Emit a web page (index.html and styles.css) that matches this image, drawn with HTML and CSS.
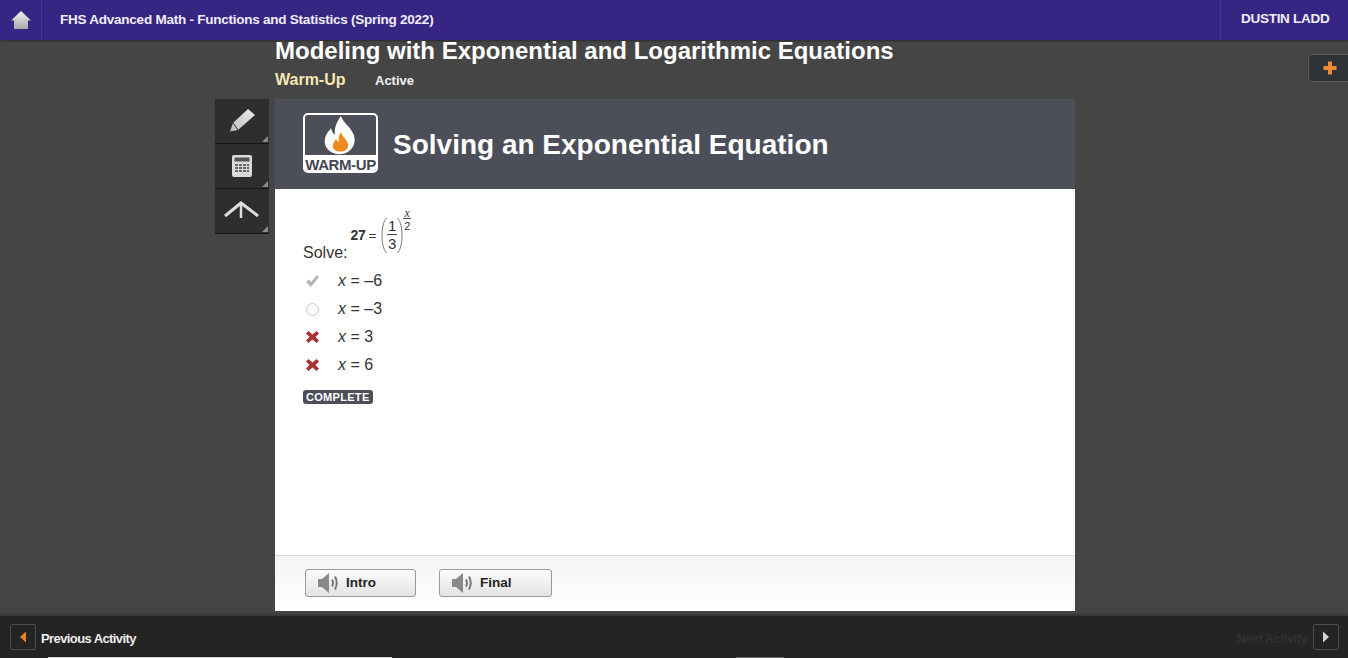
FILE: index.html
```html
<!DOCTYPE html>
<html lang="en">
<head>
<meta charset="utf-8">
<title>Warm-Up</title>
<link rel="stylesheet" href="styles.css">
</head>
<body>
<header class="topbar">
  <a class="home"><svg width="20" height="20" viewBox="0 0 20 20"><defs><linearGradient id="hg" x1="0" y1="0" x2="0" y2="1"><stop offset="0" stop-color="#f2f2f2"/><stop offset="1" stop-color="#a9a9a9"/></linearGradient></defs><path d="M10 1 L20 10.500 H17 V19 H3 V10.500 H0 Z" fill="url(#hg)"/></svg></a>
  <div class="course">FHS Advanced Math - Functions and Statistics (Spring 2022)</div>
  <div class="user">DUSTIN LADD</div>
</header>
<div class="stage">
  <div class="plus-tab"><svg width="14" height="14" viewBox="0 0 14 14"><path d="M5 0.500H9V5H13.500V9H9V13.500H5V9H0.500V5H5Z" fill="#ee8a32"/></svg></div>
  <aside class="tools">
    <div class="tool"><svg width="28" height="30" viewBox="0 0 28 30"><defs><linearGradient id="pg" x1="0" y1="1" x2="1" y2="0"><stop offset="0" stop-color="#bdbdbd"/><stop offset="1" stop-color="#ececec"/></linearGradient></defs><path d="M20 3 L27 9 L10 24 L2 25.500 L5 17 Z" fill="url(#pg)"/><path d="M5 17 L10 24" stroke="#333" stroke-width="1"/></svg></div>
    <div class="tool"><svg width="22" height="24" viewBox="0 0 22 24"><rect x="1" y="1" width="20" height="22" rx="2" fill="#dadada"/><rect x="3.500" y="3.500" width="15" height="4" fill="#555"/><path d="M4 10h3v2H4zM8 10h3v2H8zM12 10h3v2H12zM16 10h2v2H16zM4 13h3v2H4zM8 13h3v2H8zM12 13h3v2H12zM16 13h2v2H16zM4 16h3v2H4zM8 16h3v2H8zM12 16h3v2H12zM16 16h2v2H16z" fill="#666"/></svg></div>
    <div class="tool"><svg width="36" height="22" viewBox="0 0 36 22"><path d="M1 16 L17 3 L34 16" fill="none" stroke="#dedede" stroke-width="3"/><path d="M17 3 V18" stroke="#dedede" stroke-width="2.500"/></svg></div>
  </aside>
  <main class="column">
    <h1 class="lesson">Modeling with Exponential and Logarithmic Equations</h1>
    <div class="crumb"><span class="kind">Warm-Up</span><span class="status">Active</span></div>
    <section class="card">
      <div class="banner">
        <div class="badge">
          <svg class="flame" width="40" height="41" viewBox="0 0 40 46" preserveAspectRatio="none"><path d="M21 1 C23 9 31 13 34 23 C37 35 29 44 20 44 C10 44 3 36 5 26 C6 21 9 18 11 15 C12 19 13 21 15 22 C14 14 17 7 21 1Z" fill="#fff"/><path d="M21 19 C22 25 27 26 28 33 C29 39 24 41 20 41 C15 41 12 37 13 33 C14 30 15 29 16 27 C17 29 18 30 19 30 C18 26 19 22 21 19Z" fill="#ee8a1f"/></svg>
          <span class="badge-label">WARM-UP</span>
        </div>
        <h2 class="activity">Solving an Exponential Equation</h2>
      </div>
      <div class="content">
        <div class="prompt">
          <span class="solve">Solve:</span>
          <span class="math">
            <span class="m27">27</span><span class="meq">=</span>
            <svg class="paren" width="6" height="37" viewBox="0 0 6 37"><path d="M5.500 1 C2 5 1 12 1 18.500 C1 25 2 32 5.500 36" fill="none" stroke="#777" stroke-width="1"/></svg>
            <span class="frac"><span class="fnum">1</span><span class="fden">3</span></span>
            <svg class="paren" width="6" height="37" viewBox="0 0 6 37"><path d="M0.500 1 C4 5 5 12 5 18.500 C5 25 4 32 0.500 36" fill="none" stroke="#777" stroke-width="1"/></svg>
            <span class="exp"><i class="expn">x</i><span class="expd">2</span></span>
          </span>
        </div>
        <ul class="answers">
          <li class="answer"><span class="mark"><svg width="15" height="14" viewBox="0 0 15 14"><path d="M1 8 L4 5.500 L6 8 L12 1 L14 3 L6 13 Z" fill="#b5b5b5"/></svg></span><span><i>x</i> = –6</span></li>
          <li class="answer"><span class="mark"><svg width="15" height="15" viewBox="0 0 15 15"><circle cx="7.500" cy="7.500" r="6" fill="#fafafa" stroke="#c9c9c9"/></svg></span><span><i>x</i> = –3</span></li>
          <li class="answer"><span class="mark"><svg width="15" height="14" viewBox="0 0 15 14"><path d="M1 3.500 L3.500 1 L7.500 4.500 L11.500 1 L14 3.500 L10.500 7 L14 10.500 L11.500 13 L7.500 9.500 L3.500 13 L1 10.500 L4.500 7 Z" fill="#a93232"/></svg></span><span><i>x</i> = 3</span></li>
          <li class="answer"><span class="mark"><svg width="15" height="14" viewBox="0 0 15 14"><path d="M1 3.500 L3.500 1 L7.500 4.500 L11.500 1 L14 3.500 L10.500 7 L14 10.500 L11.500 13 L7.500 9.500 L3.500 13 L1 10.500 L4.500 7 Z" fill="#a93232"/></svg></span><span><i>x</i> = 6</span></li>
        </ul>
        <span class="complete">COMPLETE</span>
      </div>
      <div class="audio">
        <button class="audio-btn intro"><svg width="22" height="24" viewBox="0 0 22 24"><path d="M1 8H5L12 2V22L5 16H1Z" fill="#8a8a8a"/><path d="M15 8.500 Q17 12 15 15.500M18 5.500 Q21.500 12 18 18.500" fill="none" stroke="#777" stroke-width="2"/></svg>Intro</button>
        <button class="audio-btn final"><svg width="22" height="24" viewBox="0 0 22 24"><path d="M1 8H5L12 2V22L5 16H1Z" fill="#8a8a8a"/><path d="M15 8.500 Q17 12 15 15.500M18 5.500 Q21.500 12 18 18.500" fill="none" stroke="#777" stroke-width="2"/></svg>Final</button>
      </div>
    </section>
  </main>
</div>
<footer class="footer">
  <div class="nav">
    <span class="nav-btn"><svg width="8" height="12" viewBox="0 0 8 12"><path d="M7 0.500V11.500L1 6Z" fill="#e9821f"/></svg></span>
    <span class="prev">Previous Activity</span>
  </div>
  <div class="nav">
    <span class="next">Next Activity</span>
    <span class="nav-btn small"><svg width="8" height="12" viewBox="0 0 8 12"><path d="M1 0.500V11.500L7 6Z" fill="#d4d4d4"/></svg></span>
  </div>
  <div class="progress one"></div>
  <div class="progress two"></div>
</footer>
</body>
</html>
```
FILE: styles.css
```css
* { box-sizing: border-box; }
html, body { margin: 0; height: 658px; overflow: hidden; }
body {
  display: flex;
  flex-direction: column;
  background: #454545;
  font-family: "Liberation Sans", Arial, sans-serif;
  color: #222;
}
.topbar {
  flex: 0 0 40px;
  display: flex;
  align-items: center;
  background: #372584;
  color: #f0eef8;
  box-shadow: 0 1px 2px rgba(0,0,0,.4);
  font-weight: bold;
  font-size: 13.500px;
}
.home {
  flex: 0 0 42px;
  height: 40px;
  display: flex;
  align-items: center;
  justify-content: center;
  border-right: 1px solid #45349a;
}
.course { flex: 1; padding: 0 0 2px 18px; letter-spacing: -0.24px; }
.user {
  flex: 0 0 128px;
  height: 40px;
  line-height: 38px;
  padding-left: 20px;
  border-left: 1px solid #45349a;
  letter-spacing: -0.28px;
}
.stage {
  position: relative;
  flex: 1;
  display: flex;
  padding-left: 215px;
}
.plus-tab {
  position: absolute;
  right: -6px;
  top: 14px;
  width: 46px;
  height: 28px;
  display: flex;
  align-items: center;
  padding-left: 14px;
  background: #2f3236;
  border: 1px solid #5c5c5c;
  border-radius: 4px;
}
.tools {
  width: 60px;
  padding-top: 59px;
  display: flex;
  flex-direction: column;
}
.tool {
  position: relative;
  width: 54px;
  height: 45px;
  display: flex;
  align-items: center;
  justify-content: center;
  background: #2e2e2e;
  border-bottom: 1px solid #151515;
}
.tool::after {
  content: "";
  position: absolute;
  right: 1px;
  bottom: 1px;
  border-style: solid;
  border-width: 0 0 6px 6px;
  border-color: transparent transparent #8b8b8b transparent;
}
.column { width: 800px; display: flex; flex-direction: column; }
.lesson {
  margin: 0;
  height: 22px;
  line-height: 22px;
  color: #fff;
  font-size: 24px;
  font-weight: bold;
}
.crumb {
  height: 37px;
  padding-top: 9px;
  display: flex;
  align-items: baseline;
}
.kind { color: #f8e6b0; font-size: 16px; font-weight: bold; width: 100px; }
.status { color: #f2f2f2; font-size: 13px; font-weight: bold; }
.card { height: 512px; display: flex; flex-direction: column; background: #fff; }
.banner {
  height: 90px;
  flex: none;
  display: flex;
  align-items: flex-start;
  gap: 15px;
  padding: 14px 0 0 28px;
  background: #4c4f5a;
}
.badge {
  width: 75px;
  height: 60px;
  display: flex;
  flex-direction: column;
  align-items: center;
  justify-content: flex-end;
  position: relative;
  background: #4c4f5a;
  border: 2px solid #fff;
  border-radius: 5px;
  overflow: hidden;
}
.flame { position: absolute; top: 0; left: 15px; z-index: 1; }
.badge-label {
  width: 100%;
  height: 16px;
  line-height: 20px;
  background: #fff;
  color: #444750;
  text-align: center;
  font-size: 15px;
  font-weight: bold;
  letter-spacing: -0.4px;
  white-space: nowrap;
  position: relative;
}
.activity { margin: 16px 0 0; color: #fff; font-size: 28px; font-weight: bold; line-height: 32px; }
.content { flex: 1; padding: 20px 28px 0; display: flex; flex-direction: column; align-items: flex-start; }
.prompt { height: 52px; display: flex; align-items: flex-end; }
.solve { font-size: 16px; color: #333; line-height: 18px; margin-bottom: -1px; }
.math { display: flex; align-items: center; margin-left: 3px; height: 48px; position: relative; top: -2px; color: #333; font-size: 15px; }
.m27 { font-size: 14px; font-weight: bold; letter-spacing: -0.2px; }
.meq { margin: 0 5px 0 3px; font-size: 13px; }
.paren { flex: none; }
.frac { display: flex; flex-direction: column; align-items: center; width: 10px; }
.fnum { line-height: 17px; border-bottom: 1px solid #444; width: 100%; text-align: center; }
.fden { line-height: 18px; }
.exp { display: flex; flex-direction: column; align-items: center; align-self: flex-start; margin: -3px 0 0 0; width: 8px; }
.expn { border-bottom: 1px solid #444; width: 8px; text-align: center; font: italic 12px/10px "Liberation Serif", serif; }
.expd { font-size: 11px; line-height: 15px; }
.answers { list-style: none; margin: 6px 0 0; padding: 0; }
.answer { height: 28px; display: flex; align-items: center; font-size: 16px; color: #333; }
.mark { width: 35px; display: flex; align-items: center; padding-left: 2px; }
.complete {
  margin-top: 11px;
  height: 14px;
  line-height: 14px;
  padding: 0 3px;
  background: #4c4f5a;
  color: #fff;
  border-radius: 3px;
  font-size: 11px;
  font-weight: bold;
  letter-spacing: .3px;
}
.audio {
  flex: 0 0 56px;
  display: flex;
  align-items: center;
  padding: 0 0 2px 30px;
  gap: 23px;
  border-top: 1px solid #d8d8d8;
  background: linear-gradient(#f4f4f4, #fff);
}
.audio-btn {
  height: 28px;
  display: flex;
  align-items: center;
  gap: 7px;
  padding: 0 0 0 11px;
  background: linear-gradient(#fcfcfc, #e3e3e3);
  border: 1px solid #9a9a9a;
  border-radius: 3px;
  font: bold 13.500px "Liberation Sans", Arial, sans-serif;
  color: #222;
}
.intro { width: 111px; }
.final { width: 113px; }
.footer {
  position: relative;
  flex: 0 0 42px;
  display: flex;
  align-items: center;
  justify-content: space-between;
  padding: 0 9px 0 10px;
  background: #242424;
  box-shadow: 0 -1px 3px rgba(0,0,0,.35);
}
.nav { display: flex; align-items: center; gap: 5px; }
.nav-btn {
  width: 26px;
  height: 26px;
  display: flex;
  align-items: center;
  justify-content: center;
  border: 1px solid #4d4d4d;
  border-radius: 2px;
}
.prev { color: #eee; font-size: 13px; font-weight: bold; letter-spacing: -0.6px; padding-top: 2px; }
.next { color: #303030; font-size: 13px; font-weight: bold; letter-spacing: -0.6px; margin-right: 1px; padding-top: 2px; }
.progress { position: absolute; bottom: 0; height: 1px; }
.one { left: 48px; width: 344px; background: #cfcfcf; }
.two { left: 736px; width: 48px; background: #666; }
```
